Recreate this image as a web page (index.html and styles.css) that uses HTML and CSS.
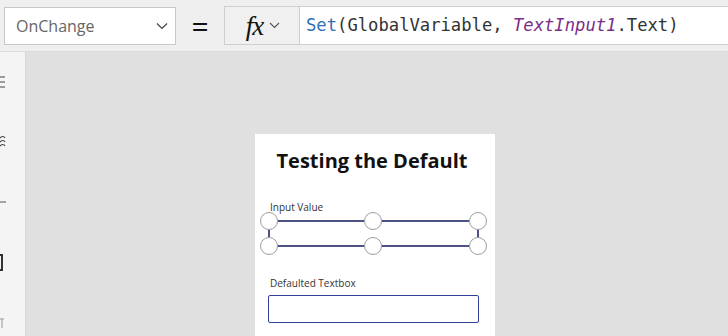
FILE: index.html
```html
<!DOCTYPE html>
<html lang="en">
<head>
  <meta charset="UTF-8" />
  <title>OnChange formula</title>
  <link rel="stylesheet" href="styles.css">
</head>
<body>

<!-- Formula bar -->
<div class="formula-bar">
  <div class="prop-select">
    <span>OnChange</span>
    <svg class="chev" width="12" height="8" viewBox="0 0 12 8"><path d="M1 1.5 L6 6.5 L11 1.5" fill="none" stroke="#444" stroke-width="1.2"/></svg>
  </div>
  <div class="equals">=</div>
  <div class="fx-btn">
    <span class="fx">fx</span>
    <svg width="11" height="7" viewBox="0 0 11 7"><path d="M1 1 L5.5 5.5 L10 1" fill="none" stroke="#555" stroke-width="1.1"/></svg>
  </div>
  <div class="formula"><span class="fn">Set</span>(GlobalVariable, <span class="ctl">TextInput1</span>.Text)</div>
</div>

<div class="main">
  <!-- Left tool rail (icons cut off at the edge) -->
  <div class="rail">
    <svg width="25" height="283" viewBox="0 0 25 283">
      <g stroke="#444" stroke-width="1.2" fill="none">
        <path d="M0 25 H5 M0 30 H5 M0 35 H5"/>
        <path d="M0 86 C2 84 4 84 5 86 M0 90 C2 88 4 88 5 90 M0 94 C2 92 4 92 5 94"/>
      </g>
      <path d="M0 150 H6" stroke="#888" stroke-width="1.5"/>
      <path d="M0 203 H2 V218 H0" stroke="#333" stroke-width="2" fill="none"/>
      <path d="M0 267 H4 M2 267 V276" stroke="#999" stroke-width="1"/>
    </svg>
  </div>

  <!-- Canvas with the screen -->
  <div class="canvas">
    <div class="screen">
      <h1 class="title">Testing the Default</h1>

      <div class="label first">Input Value</div>
      <div class="input selected">
        <span class="handle tl"></span>
        <span class="handle tm"></span>
        <span class="handle tr"></span>
        <span class="handle bl"></span>
        <span class="handle bm"></span>
        <span class="handle br"></span>
      </div>

      <div class="label second">Defaulted Textbox</div>
      <div class="input plain"></div>
    </div>
  </div>
</div>

</body>
</html>
```

FILE: styles.css
```css
body {
  margin: 0;
  width: 728px;
  height: 336px;
  overflow: hidden;
  font-family: 'Open Sans', 'Noto Sans', sans-serif;
  background: #e0e0e0;
  color: #222;
}

.formula-bar {
  height: 52px;
  background: #efefef;
  border-bottom: 1px solid #dadada;
  display: flex;
  align-items: flex-start;
  box-sizing: border-box;
  padding: 6px 0 0 4px;
}

.prop-select {
  width: 172px;
  height: 38px;
  margin-top: 1px;
  box-sizing: border-box;
  background: #fff;
  border: 1px solid #c8c8c8;
  display: flex;
  align-items: center;
  justify-content: space-between;
  padding: 0 7px 0 11px;
  font-size: 16px;
  color: #666;
}

.equals {
  width: 48px;
  text-align: center;
  font-size: 30px;
  line-height: 40px;
  color: #111;
}

.fx-btn {
  width: 75px;
  height: 39px;
  box-sizing: border-box;
  background: #f0f0f0;
  border: 1px solid #cfcfcf;
  border-right: none;
  display: flex;
  align-items: center;
  justify-content: center;
  gap: 6px;
  padding-left: 2px;
}

.fx {
  font-family: 'Liberation Serif', serif;
  font-style: italic;
  font-size: 27px;
  line-height: 30px;
  color: #111;
  letter-spacing: -1px;
}

.formula {
  flex: 1;
  height: 39px;
  box-sizing: border-box;
  background: #fff;
  border: 1px solid #cfcfcf;
  border-right: none;
  padding-left: 6px;
  font-family: 'DejaVu Sans Mono', monospace;
  font-size: 17.2px;
  line-height: 37px;
  color: #333;
  white-space: nowrap;
}

.fn {
  color: #2e6fb8;
}

.ctl {
  color: #7a2e8a;
  font-style: italic;
}

.main {
  display: flex;
  height: 284px;
}

.rail {
  width: 25px;
  background: #f4f4f4;
  border-right: 1px solid #d8d8d8;
}

.rail svg {
  display: block;
}

.canvas {
  flex: 1;
  padding: 82px 0 0 229px;
}

.screen {
  width: 240px;
  height: 210px;
  background: #fff;
  padding: 1px 0 0 13px;
  box-sizing: border-box;
}

.title {
  margin: 12px 0 0;
  width: 208px;
  text-align: center;
  font-size: 20px;
  font-weight: 700;
  color: #111;
  letter-spacing: 0;
}

.label {
  font-size: 10px;
  color: #333;
  margin-left: 2px;
}

.label.first {
  margin-top: 26px;
}

.label.second {
  margin-top: 29px;
}

.input {
  width: 211px;
  box-sizing: border-box;
  position: relative;
}

.input.selected {
  height: 27px;
  margin-top: 6px;
  border: 2px solid #4d5285;
}

.input.plain {
  height: 28px;
  margin-top: 5px;
  border: 1px solid #33409a;
  border-radius: 2px;
}

.handle {
  position: absolute;
  width: 18px;
  height: 18px;
  box-sizing: border-box;
  border-radius: 50%;
  background: #fff;
  border: 1px solid #9e9e9e;
}

.tl { left: -10px; top: -10px; }
.tm { left: 94px; top: -10px; }
.tr { right: -10px; top: -10px; }
.bl { left: -10px; bottom: -10px; }
.bm { left: 94px; bottom: -10px; }
.br { right: -10px; bottom: -10px; }
```
